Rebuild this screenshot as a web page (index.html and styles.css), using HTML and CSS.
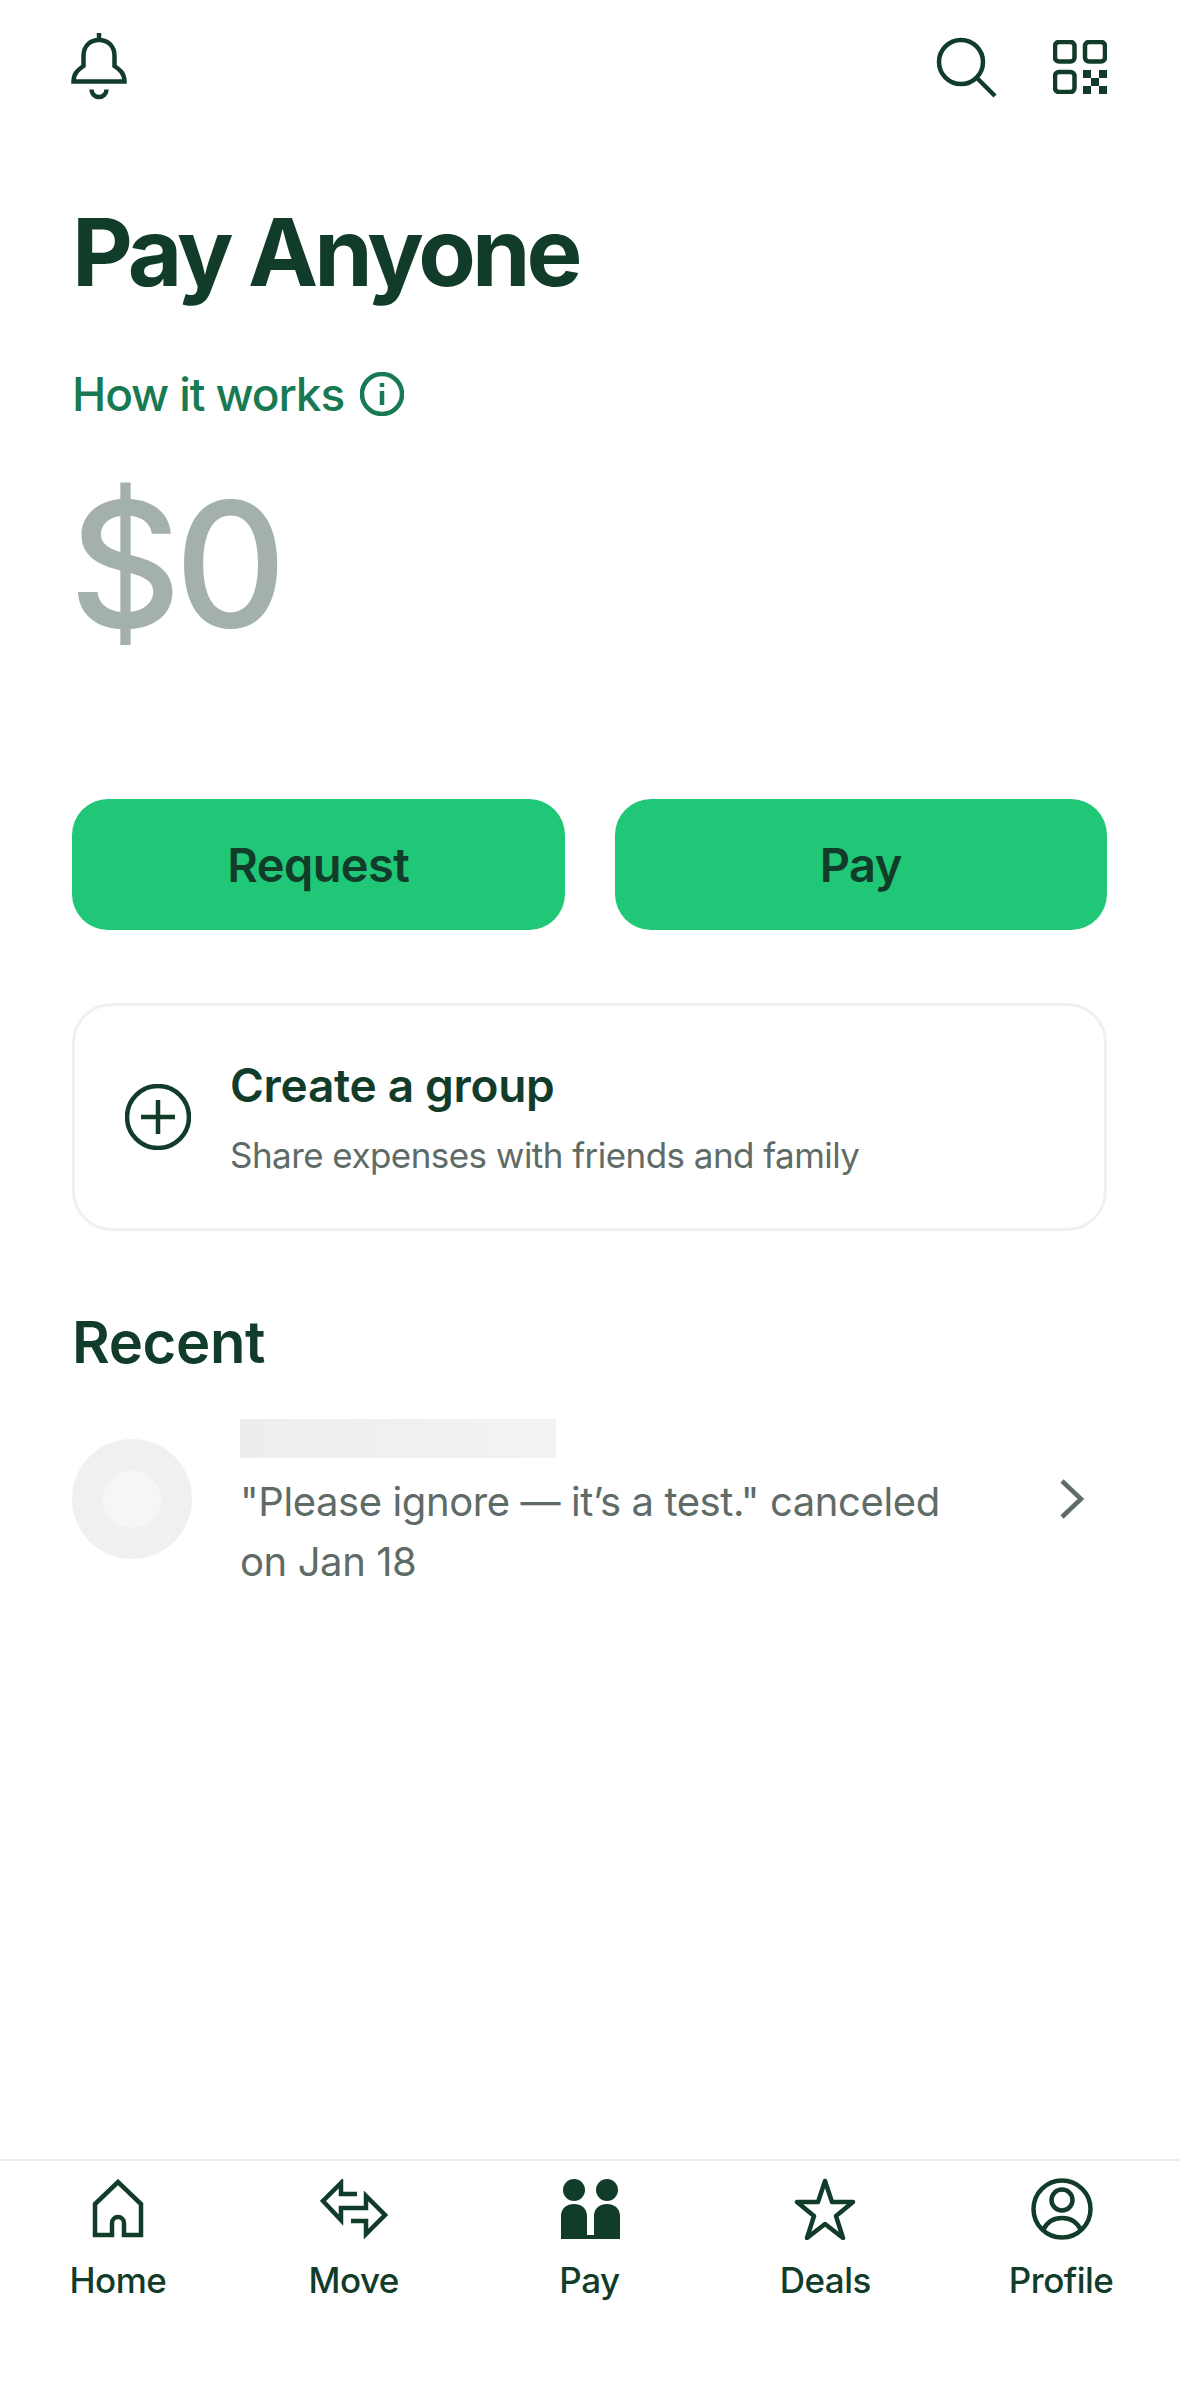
FILE: index.html
```html
<!DOCTYPE html>
<html>

<head>
	<meta name="viewport" content="width=device-width, initial-scale=1" />
	<title>Pay Anyone</title>
	<link rel="stylesheet" href="styles.css">
</head>

<body>
	<div class="screen">
		<main class="main">
			<header class="topbar">
				<svg class="bell" width="56" height="68" viewBox="0 0 56 68">
					<path d="M28 1V8M2.500 49.500C2.500 41 8 37 12.500 34V24C12.500 14 19 8 28 8C37 8 43.500 14 43.500 24V34C48 37 53.500 41 53.500 49.500Z" />
					<path d="M20.500 57.500a7.500 7.500 0 0 0 15 0" />
				</svg>
				<div class="topbar-right">
					<svg width="62" height="62" viewBox="0 0 62 62">
						<circle cx="25" cy="25" r="22" />
						<path d="M41 41L59 59" />
					</svg>
					<svg class="qr" width="54" height="54" viewBox="0 0 54 54">
						<rect x="2" y="2" width="19.500" height="19.500" rx="4" />
						<rect x="32" y="2" width="20" height="19.500" rx="4" />
						<rect x="2" y="32" width="19.500" height="20" rx="4" />
						<g class="filled">
							<rect x="30" y="30" width="8" height="8" />
							<rect x="46" y="30" width="8" height="8" />
							<rect x="38" y="38" width="8" height="8" />
							<rect x="30" y="46" width="8" height="8" />
							<rect x="46" y="46" width="8" height="8" />
						</g>
					</svg>
				</div>
			</header>

			<h1 class="title">Pay Anyone</h1>

			<a class="how" href="#">How it works
				<svg width="44" height="44" viewBox="0 0 44 44">
					<circle cx="22" cy="22" r="20" />
					<path d="M22 19V33M22 11V15" />
				</svg>
			</a>

			<div class="amount">$0</div>

			<div class="buttons">
				<button class="btn">Request</button>
				<button class="btn">Pay</button>
			</div>

			<div class="card">
				<svg width="66" height="66" viewBox="0 0 66 66">
					<circle cx="33" cy="33" r="31" />
					<path d="M33 16V50M16 33H50" />
				</svg>
				<div class="card-text">
					<div class="card-title">Create a group</div>
					<div class="card-sub">Share expenses with friends and family</div>
				</div>
			</div>

			<h2 class="recent">Recent</h2>

			<div class="row">
				<div class="avatar"><div class="avatar-dot"></div></div>
				<div class="row-text">
					<div class="blurred"></div>
					<div class="row-desc">"Please ignore — it’s a test." canceled on Jan 18</div>
				</div>
				<svg class="chevron" width="26" height="40" viewBox="0 0 26 40">
					<path d="M3 2L22 20L3 38" />
				</svg>
			</div>
		</main>

		<nav class="nav">
			<a class="tab" href="#">
				<span class="tab-icon">
					<svg width="54" height="60" viewBox="0 0 54 60">
						<path d="M21 56H4V25L27 3L50 25V56H33V44a6 6 0 0 0 -12 0Z" />
					</svg>
				</span>
				Home
			</a>
			<a class="tab" href="#">
				<span class="tab-icon">
					<svg width="68" height="60" viewBox="0 0 68 60">
						<path d="M37 15H21V4L3 22L21 41V29H46V17L65 36L46 55V42H31" />
					</svg>
				</span>
				Move
			</a>
			<a class="tab" href="#">
				<span class="tab-icon tab-icon-pay">
					<svg class="filled" width="60" height="60" viewBox="0 0 60 60">
						<ellipse cx="13" cy="11" rx="11" ry="11" />
						<ellipse cx="46" cy="11" rx="11" ry="11" />
						<path d="M0 60V37C0 29 6 25 13 25C20 25 26 29 26 37V56H33V37C33 29 39 25 46 25C53 25 59 29 59 37V60Z" />
					</svg>
				</span>
				Pay
			</a>
			<a class="tab" href="#">
				<span class="tab-icon">
					<svg class="star" width="64" height="62" viewBox="0 0 64 62">
						<path d="M32 3L39 24H60L43 38L50 60L32 46L14 60L21 38L4 24H25Z" />
					</svg>
				</span>
				Deals
			</a>
			<a class="tab" href="#">
				<span class="tab-icon tab-icon-profile">
					<svg width="62" height="62" viewBox="0 0 62 62">
						<circle cx="31" cy="31" r="28.500" />
						<circle cx="31" cy="22" r="10.500" />
						<path d="M12 52C16 44 23 40 31 40C39 40 46 44 50 52" />
					</svg>
				</span>
				Profile
			</a>
		</nav>
	</div>
</body>

</html>
```

FILE: styles.css
```css
body {
	margin:0;
	background-color:#fff;
	color:#123c2a;
	font-family:"Inter","Liberation Sans",sans-serif;
}

a {
	color:inherit;
	text-decoration:none;
}

svg {
	display:block;
	flex:none;
	fill:none;
	stroke:currentColor;
	stroke-width:4.5;
}

svg .filled, svg.filled {
	fill:currentColor;
	stroke:none;
}

.star {
	stroke-linejoin:round;
}

.screen {
	display:flex;
	flex-direction:column;
	height:2396px;
	overflow:hidden;
}

.main {
	flex:1;
	padding:0 72px;
}

.topbar {
	display:flex;
	justify-content:space-between;
	align-items:flex-start;
	padding-top:32px;
}

.bell {
	margin-left:-1px;
}

.topbar-right {
	display:flex;
	gap:55px;
	padding-top:5px;
}

.qr {
	margin-top:3px;
}

.title {
	margin:97px 0 0;
	font-size:94px;
	line-height:110px;
	font-weight:700;
	letter-spacing:-3.9px;
}

.how {
	display:flex;
	align-items:center;
	gap:16px;
	margin-top:59px;
	font-size:46px;
	line-height:56px;
	font-weight:500;
	letter-spacing:-1.1px;
	color:#187a52;
}

.amount {
	margin-top:42px;
	margin-left:-3px;
	font-size:174px;
	line-height:200px;
	font-weight:500;
	letter-spacing:-7px;
	color:#a3b1aa;
}

.buttons {
	display:flex;
	gap:50px;
	margin-top:135px;
}

.btn {
	flex:1;
	height:131px;
	border:0;
	border-radius:36px;
	background-color:#20c777;
	color:#123c2a;
	font-family:inherit;
	font-size:47px;
	font-weight:600;
	letter-spacing:-0.6px;
}

.card {
	display:flex;
	align-items:center;
	gap:39px;
	height:228px;
	box-sizing:border-box;
	margin-top:73px;
	padding:0 50px;
	border:3px solid #f0f0f0;
	border-radius:40px;
}

.card-title {
	font-size:46px;
	line-height:56px;
	font-weight:600;
	letter-spacing:-0.3px;
}

.card-sub {
	margin-top:20px;
	font-size:35px;
	line-height:44px;
	letter-spacing:-0.55px;
	color:#5f6b66;
}

.recent {
	margin:76px 0 0;
	font-size:58px;
	line-height:70px;
	font-weight:600;
	letter-spacing:-0.4px;
}

.row {
	display:flex;
	align-items:flex-start;
	margin-top:42px;
}

.avatar {
	display:flex;
	align-items:center;
	justify-content:center;
	width:120px;
	height:120px;
	flex:none;
	margin-top:20px;
	border-radius:50%;
	background-color:#f0f0f0;
}

.avatar-dot {
	width:58px;
	height:58px;
	border-radius:50%;
	background-color:#f6f6f6;
}

.row-text {
	flex:1;
	margin-left:48px;
}

.blurred {
	width:316px;
	height:39px;
	background:linear-gradient(90deg,#eceeed,#f2f3f3);
}

.row-desc {
	width:730px;
	margin-top:14px;
	font-size:40px;
	line-height:60px;
	letter-spacing:-0.4px;
	color:#5f6b66;
}

.chevron {
	margin-top:60px;
	margin-right:22px;
	color:#5f6b66;
}

.nav {
	display:grid;
	grid-template-columns:repeat(5,1fr);
	height:237px;
	box-sizing:border-box;
	border-top:2px solid #ececec;
}

.tab {
	display:flex;
	flex-direction:column;
	align-items:center;
	padding-top:16px;
	font-size:35px;
	line-height:44px;
	font-weight:500;
	letter-spacing:-0.5px;
}

.tab-icon {
	display:flex;
	align-items:center;
	height:64px;
	margin-bottom:17px;
}

.tab-icon-pay {
	margin-left:3px;
}

.tab-icon-profile {
	margin-left:2px;
}
```
